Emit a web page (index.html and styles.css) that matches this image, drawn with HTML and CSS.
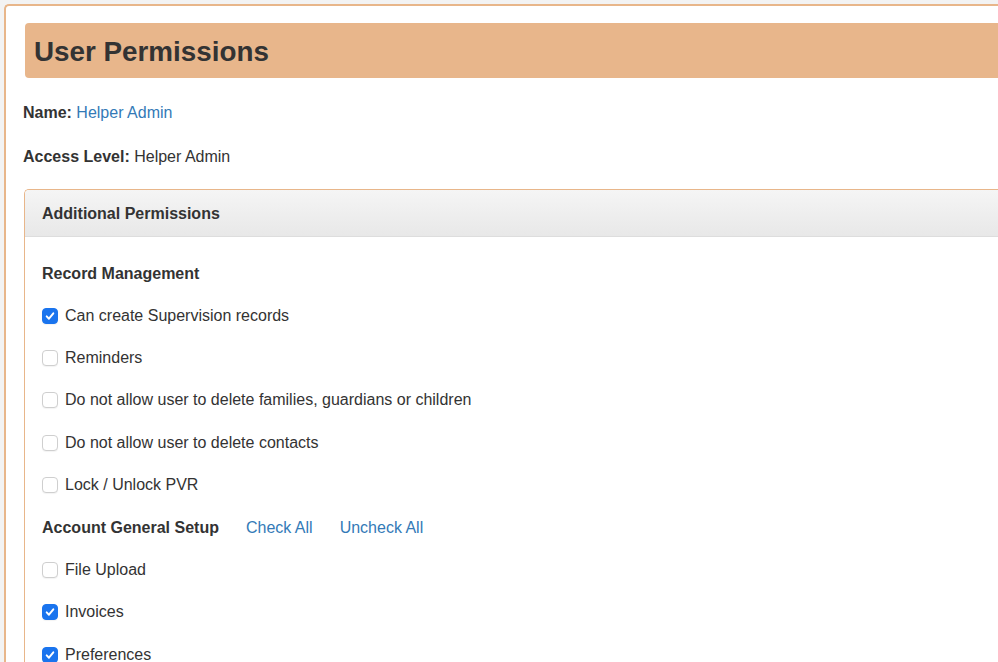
FILE: index.html
```html
<!DOCTYPE html>
<html lang="en">
  <head>
    <meta charset="UTF-8" />
    <meta name="viewport" content="width=device-width, initial-scale=1.0" />
    <title>User Permissions</title>

    <link rel="stylesheet" href="styles.css">
  </head>
  <body>
    <div id="page">
      <h1 class="title">User Permissions</h1>

      <p class="info"><b>Name:</b> <a href="#">Helper Admin</a></p>
      <p class="info"><b>Access Level:</b> Helper Admin</p>

      <div class="panel">
        <div class="panel-heading">Additional Permissions</div>
        <div class="panel-body">
          <div class="row section first">Record Management</div>

          <label class="row"><span class="box checked"><svg viewBox="0 0 16 16"><path d="M4.2 8.4l2.6 2.7 5-6.2" /></svg></span>Can create Supervision records</label>
          <label class="row"><span class="box"></span>Reminders</label>
          <label class="row"><span class="box"></span>Do not allow user to delete families, guardians or children</label>
          <label class="row"><span class="box"></span>Do not allow user to delete contacts</label>
          <label class="row"><span class="box"></span>Lock / Unlock PVR</label>

          <div class="row section">
            Account General Setup
            <a href="#" class="bulk">Check All</a>
            <a href="#" class="bulk">Uncheck All</a>
          </div>

          <label class="row"><span class="box"></span>File Upload</label>
          <label class="row"><span class="box checked"><svg viewBox="0 0 16 16"><path d="M4.2 8.4l2.6 2.7 5-6.2" /></svg></span>Invoices</label>
          <label class="row"><span class="box checked"><svg viewBox="0 0 16 16"><path d="M4.2 8.4l2.6 2.7 5-6.2" /></svg></span>Preferences</label>
        </div>
      </div>
    </div>
  </body>
</html>
```

FILE: styles.css
```css
body {
  margin: 0;
  padding: 4px 0 0 4px;
  background-color: #f3f3f3;
  overflow: hidden;
  font-family: "Liberation Sans", Arial, sans-serif;
  font-size: 16px;
  color: #333;
}

a {
  color: #337ab7;
  text-decoration: none;
}

#page {
  width: 1100px;
  height: 760px;
  padding: 17px 0 0 17px;
  background-color: #fff;
  border: 2px solid #e8b68a;
  border-right: none;
  border-radius: 5px 0 0 0;
}

.title {
  margin: 0 0 0 2px;
  height: 55px;
  line-height: 57px;
  padding: 0 9px;
  background-color: #e8b68b;
  border-radius: 4px 0 0 4px;
  font-size: 27.8px;
  font-weight: bold;
}

.info {
  margin: 24px 0 0;
  line-height: 20px;
}

.info:first-of-type {
  margin-top: 25px;
}

.panel {
  margin: 22px 0 0 1px;
  border: 1px solid #e8b68a;
  border-right: none;
  border-radius: 5px 0 0 5px;
}

.panel-heading {
  height: 46px;
  line-height: 48px;
  padding: 0 17px;
  font-weight: bold;
  background: linear-gradient(#f5f5f5, #e8e8e8);
  border-bottom: 1px solid #ddd;
  border-radius: 4px 0 0 0;
}

.panel-body {
  padding: 15px 17px 0;
}

.row {
  display: flex;
  align-items: center;
  height: 42.4px;
}

.section {
  font-weight: bold;
}

.section.first {
  padding-top: 2px;
  height: 40.4px;
}

.bulk {
  font-weight: normal;
  margin-left: 27px;
}

.box {
  width: 14px;
  height: 14px;
  margin-right: 7px;
  border: 1px solid #cfcfcf;
  border-radius: 4px;
  background-color: #fff;
  box-shadow: 0 1px 1px rgba(0, 0, 0, 0.05);
}

.box.checked {
  border-color: #1a74ee;
  background-color: #1a74ee;
}

.box svg {
  display: block;
  width: 14px;
  height: 14px;
}

.box path {
  fill: none;
  stroke: #fff;
  stroke-width: 2.2;
  stroke-linecap: round;
  stroke-linejoin: round;
}
```
